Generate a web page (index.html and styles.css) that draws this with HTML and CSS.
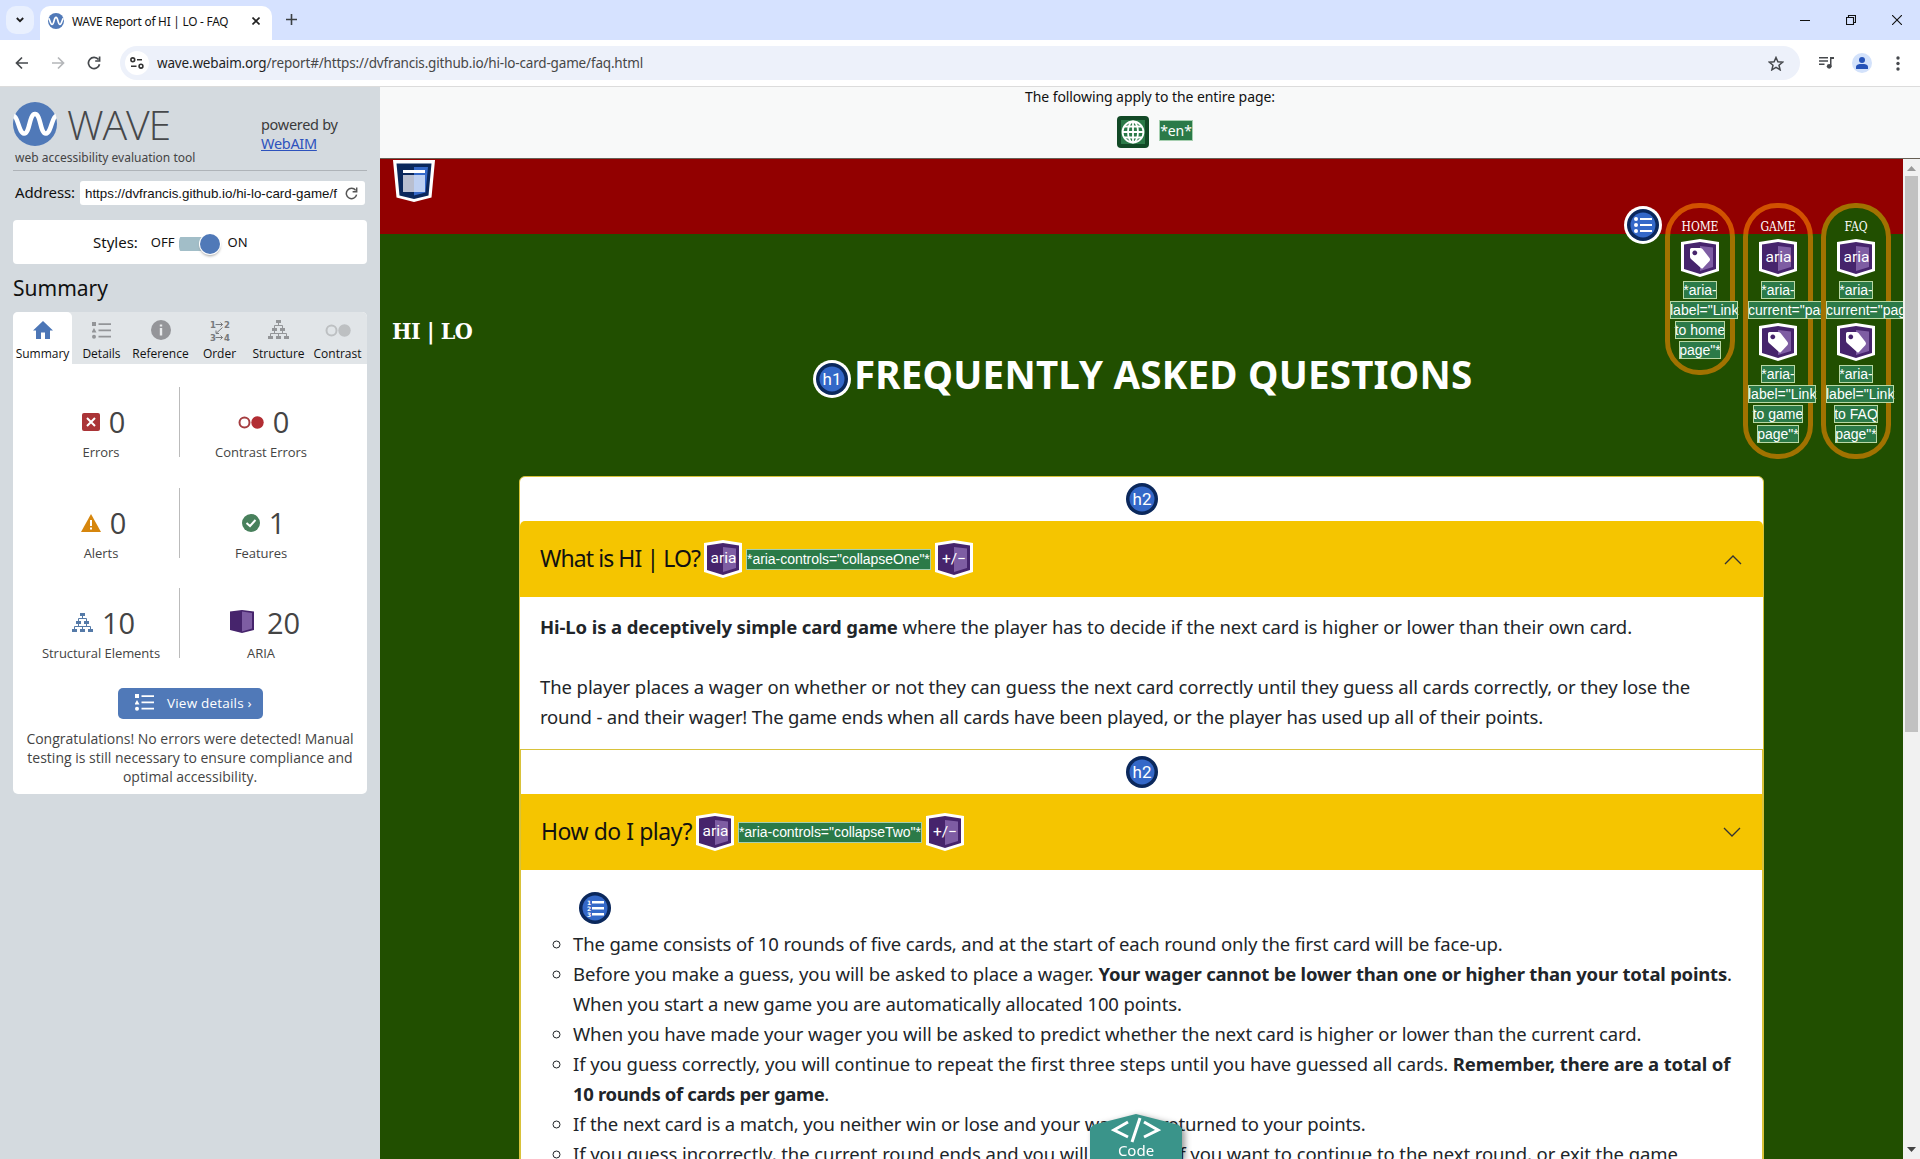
FILE: index.html
```html
<!DOCTYPE html>
<html lang="en">
<head>
<meta charset="utf-8">
<title>WAVE Report of HI | LO - FAQ</title>
<link rel="stylesheet" href="styles.css">
</head>
<body>
<svg class="defs" aria-hidden="true">
  <symbol id="wave" viewBox="0 0 44 44"><circle cx="22" cy="22" r="22" fill="#5079b8"/><path d="M1 14C5 15 6 31 11 31.500C17 32 16 12 22 12S27 32 33 31.500C38 31 39 15 43 14" fill="none" stroke="#fff" stroke-width="4.500"/></symbol>
  <symbol id="aria-base" viewBox="0 0 38 38"><path d="M0 3 19 0 38 3V32L19 38 0 32Z" fill="#fff"/><path d="M3 5.500 19 3 35 5.500V30L19 35 3 30Z" fill="#46246c"/><path d="M19 7 32 8.500V28L19 32Z" fill="#7e5da3"/></symbol>
  <symbol id="label" viewBox="0 0 38 38"><use href="#aria-base"/><path fill-rule="evenodd" d="M9 10.500Q9 9 10.500 9H19Q20.500 9 21.500 10L28.500 19Q29.500 20.500 28.500 22L22 29Q21 30 20 29L10 20Q9 19 9 17.500ZM13.800 11.500a2.400 2.400 0 1 0 .01 0Z" fill="#fff"/></symbol>
  <symbol id="disc" viewBox="0 0 32 32"><circle cx="16" cy="16" r="16" fill="#0b285c"/><circle cx="16" cy="16" r="12.500" fill="#3468c8"/></symbol>
  <symbol id="tree" viewBox="0 0 21 20"><path d="M8 0h5v3H8zM4 8h5v3H4zM12 8h5v3h-5zM0 16h5v3H0zM8 16h5v3H8zM16 16h5v3h-5z"/><path d="M10.500 3V5.500M6.500 8V5.500H14.500V8M6.500 11V13.500M14.500 11V13.500M2.500 16V13.500H18.500V16M10.500 13.500V16" fill="none" stroke="currentColor"/></symbol>
  <symbol id="list" viewBox="0 0 19 17"><path d="M0 0h4v4H0zM2 6 4.500 10.500H-.500zM6.500 1.200H19V3H6.500zM6.500 7.500H19V9.300H6.500zM6.500 13.800H19V15.600H6.500z"/><circle cx="2" cy="14.700" r="2"/></symbol>
</svg>
<header class="tabstrip">
  <div class="tab-search"><svg width="8" height="6" viewBox="0 0 8 6"><path d="M.8 1 4 4.200 7.200 1" fill="none" stroke="#1f1f1f" stroke-width="1.800"/></svg></div>
  <div class="tab"><svg class="favicon"><use href="#wave"/></svg><span class="tab-title">WAVE Report of HI | LO - FAQ</span><svg width="8" height="8" viewBox="0 0 8 8"><path d="M.5.500 7.500 7.500M7.500.500.500 7.500" stroke="#222" stroke-width="1.600"/></svg></div>
  <svg class="new-tab" width="11" height="11" viewBox="0 0 11 11"><path d="M5.500 0V11M0 5.500H11" stroke="#3c4043" stroke-width="1.600"/></svg>
  <div class="window-buttons">
    <svg width="10" height="10" viewBox="0 0 10 10"><path d="M0 5.500H10" stroke="#111"/></svg>
    <svg width="10" height="10" viewBox="0 0 10 10" fill="none" stroke="#111" stroke-width="1.100"><path d="M.5 2.500H7.500V9.500H.5zM2.500 2.500V.500H9.500V7.500H7.500"/></svg>
    <svg width="10" height="10" viewBox="0 0 10 10"><path d="M0 0 10 10M10 0 0 10" stroke="#111" stroke-width="1.100"/></svg>
  </div>
</header>
<nav class="toolbar">
  <div class="history">
    <svg width="14" height="14" viewBox="0 0 14 14" fill="none" stroke="#46494d" stroke-width="1.700"><path d="M13 7H2M7 1.500 1.500 7 7 12.500"/></svg>
    <svg width="14" height="14" viewBox="0 0 14 14" fill="none" stroke="#b4b6b9" stroke-width="1.700"><path d="M1 7H12M7 1.500 12.500 7 7 12.500"/></svg>
    <svg width="14" height="14" viewBox="0 0 14 14" fill="none" stroke="#46494d" stroke-width="1.700"><path d="M12.500 8.200A5.600 5.600 0 1 1 11.500 3.600M12.600.500V5H8.200"/></svg>
  </div>
  <div class="omnibox">
    <span class="site-info"><svg width="14" height="12" viewBox="0 0 14 12" fill="none" stroke="#333" stroke-width="1.600"><circle cx="2.800" cy="2.800" r="1.900"/><path d="M7 2.800H12M1 9.200H6.500"/><circle cx="11" cy="9.200" r="1.900"/></svg></span>
    <span class="url"><b>wave.webaim.org</b>/report#/https://dvfrancis.github.io/hi-lo-card-game/faq.html</span>
    <svg width="16" height="15" viewBox="0 0 16 15"><path d="M8 1.500 9.900 5.800 14.600 6.200 11 9.300 12.100 13.800 8 11.400 3.900 13.800 5 9.300 1.400 6.200 6.100 5.800Z" fill="none" stroke="#46494d" stroke-width="1.500"/></svg>
  </div>
  <div class="tools">
    <svg width="15" height="12" viewBox="0 0 15 12" fill="#46494d"><path d="M0 0H9V1.500H0zM0 3.300H9V4.800H0zM0 6.600H5.500V8.100H0zM11 0H15V2H12.500V9.500H11z"/><circle cx="10.200" cy="9.300" r="2.400"/></svg>
    <svg width="20" height="20" viewBox="0 0 20 20"><circle cx="10" cy="10" r="10" fill="#d3e2fb"/><g fill="#2552b8"><circle cx="10" cy="7" r="3"/><path d="M4 16V14C4 11.500 7 11 10 11S16 11.500 16 14V16Z"/></g></svg>
    <svg width="4" height="15" viewBox="0 0 4 15" fill="#46494d"><circle cx="2" cy="2" r="1.700"/><circle cx="2" cy="7.500" r="1.700"/><circle cx="2" cy="13" r="1.700"/></svg>
  </div>
</nav>
<div class="app">
<aside class="sidebar">
  <div class="brand">
    <div class="brand-name"><div class="brand-row"><svg class="logo"><use href="#wave"/></svg><span class="wordmark">WAVE</span></div><div class="tagline">web accessibility evaluation tool</div></div>
    <div class="powered">powered by<br><a>WebAIM</a></div>
  </div>
  <div class="address"><span class="address-label">Address:</span><div class="field"><span>https://dvfrancis.github.io/hi-lo-card-game/f</span><svg width="13" height="13" viewBox="0 0 14 14" fill="none" stroke="#555" stroke-width="1.600"><path d="M12.500 8.200A5.600 5.600 0 1 1 11.500 3.600M12.600.500V5H8.200"/></svg></div></div>
  <div class="styles-box"><span class="styles-label">Styles:</span><span>OFF</span><span class="toggle"><i></i></span><span>ON</span></div>
  <h2 class="summary-title">Summary</h2>
  <section class="panel">
    <div class="tabs">
      <div class="ptab active"><svg width="20" height="18" viewBox="0 0 20 18" fill="#4c76b6"><path d="M10 0 20 9.500H17V18H12V11.500H8V18H3V9.500H0Z"/></svg><span>Summary</span></div>
      <div class="ptab"><svg class="i-list"><use href="#list"/></svg><span>Details</span></div>
      <div class="ptab"><svg width="20" height="20" viewBox="0 0 20 20"><circle cx="10" cy="10" r="10" fill="#949599"/><path d="M8.800 8H11.200V15.500H8.800zM8.800 4.500H11.200V6.500H8.800z" fill="#e8eaec"/></svg><span>Reference</span></div>
      <div class="ptab"><svg width="20" height="21" viewBox="0 0 20 21" class="order"><text x="0" y="7.500">1</text><text x="14" y="7.500">2</text><text x="0" y="20.500">3</text><text x="14" y="20.500">4</text><path d="M5.500 4.500H12.500M10.500 2.500 12.500 4.500 10.500 6.500M12.500 7.500 6 13.500M6 10.500V13.500H9M5.500 17.500H12.500M10.500 15.500 12.500 17.500 10.500 19.500"/></svg><span>Order</span></div>
      <div class="ptab"><svg class="i-tree"><use href="#tree"/></svg><span>Structure</span></div>
      <div class="ptab"><svg width="26" height="13" viewBox="0 0 26 13"><circle cx="6.500" cy="6.500" r="5" fill="none" stroke="#bdc0c2" stroke-width="2"/><circle cx="19.500" cy="6.500" r="6.200" fill="#bdc0c2"/></svg><span>Contrast</span></div>
    </div>
    <div class="stats">
      <div class="stat"><div class="num"><svg width="18" height="18" viewBox="0 0 18 18"><rect width="18" height="18" rx="2" fill="#aa3437"/><path d="M5 5 13 13M13 5 5 13" stroke="#fff" stroke-width="2"/></svg>0</div>Errors</div>
      <div class="stat"><div class="num"><svg width="26" height="13" viewBox="0 0 26 13"><circle cx="6.500" cy="6.500" r="5" fill="none" stroke="#a53d40" stroke-width="2"/><circle cx="19.500" cy="6.500" r="6.200" fill="#b22d33"/></svg>0</div>Contrast Errors</div>
      <div class="stat"><div class="num"><svg width="20" height="18" viewBox="0 0 20 18"><path d="M10 0 20 18H0Z" fill="#d6860d"/><path d="M9 6H11V12H9zM9 13.500H11V15.500H9z" fill="#fff"/></svg>0</div>Alerts</div>
      <div class="stat"><div class="num"><svg width="18" height="18" viewBox="0 0 18 18"><circle cx="9" cy="9" r="9" fill="#48805c"/><path d="M4.500 9 8 12 13.500 6" fill="none" stroke="#fff" stroke-width="2"/></svg>1</div>Features</div>
      <div class="stat"><div class="num"><svg class="i-tree blue"><use href="#tree"/></svg>10</div>Structural Elements</div>
      <div class="stat"><div class="num aria-num"><svg width="24" height="23" viewBox="0 0 24 23"><path d="M0 1.500 12 0 24 1.500V20L12 23 0 20Z" fill="#46246c"/><path d="M12 1.500 22 3V18.500L12 21.500Z" fill="#7e5da3"/></svg>20</div>ARIA</div>
    </div>
    <div class="view"><svg class="i-list white"><use href="#list"/></svg><span>View details ›</span></div>
    <p class="congrats">Congratulations! No errors were detected! Manual<br>testing is still necessary to ensure compliance and<br>optimal accessibility.</p>
  </section>
</aside>
<div class="report">
  <div class="page-info"><span>The following apply to the entire page:</span>
    <div class="lang"><svg width="32" height="32" viewBox="0 0 32 32"><rect width="32" height="32" rx="4" fill="#124926"/><rect x="4" y="4" width="24" height="24" fill="#2b7a48"/><g fill="none" stroke="#fff" stroke-width="1.800"><circle cx="16" cy="16" r="10.500"/><ellipse cx="16" cy="16" rx="5" ry="10.500"/><path d="M16 5.500V26.500M5.500 16H26.500M7 10.500H25M7 21.500H25"/></g></svg><span class="tagtext">*en*</span></div>
  </div>
  <div class="frame">
  <main class="site">
    <div class="site-head">
      <svg class="shield" width="42" height="42" viewBox="0 0 42 42"><path d="M0 0H42L38.500 37.500 21 42 3.500 37.500Z" fill="#fff"/><path d="M3.500 3.500H38.500L35.500 35.500 21 39 6.500 35.500Z" fill="#0b285c"/><path d="M21 7H35L32.500 32.500 21 35.500Z" fill="#3468c8"/><path d="M10 10H32V13H10z" fill="#fff"/><path d="M10 15H21V32H10z" fill="#b9bfd0"/><path d="M21 15H32V32H21z" fill="#bdd0f2"/></svg>
      <div class="nav">
        <svg class="nav-list" width="38" height="38" viewBox="0 0 38 38"><circle cx="19" cy="19" r="19" fill="#fff"/><use href="#disc" x="3" y="3" width="32" height="32"/><g fill="#fff"><circle cx="12" cy="13" r="2"/><circle cx="12" cy="19" r="2"/><circle cx="12" cy="25" r="2"/><path d="M16 12H28V14H16zM16 18H28V20H16zM16 24H28V26H16z"/></g></svg>
        <div class="pill"><b>HOME</b><svg class="badge"><use href="#label"/></svg><p><span>*aria-</span><br><span>label="Link</span><br><span>to home</span><br><span>page"*</span></p></div>
        <div class="pill"><b>GAME</b><svg class="badge"><use href="#aria-base"/><text x="19.500" y="23" class="aria-text">aria</text></svg><p><span>*aria-</span><br><span>current="page"*</span></p><svg class="badge"><use href="#label"/></svg><p><span>*aria-</span><br><span>label="Link</span><br><span>to game</span><br><span>page"*</span></p></div>
        <div class="pill current"><b>FAQ</b><svg class="badge"><use href="#aria-base"/><text x="19.500" y="23" class="aria-text">aria</text></svg><p><span>*aria-</span><br><span>current="page"*</span></p><svg class="badge"><use href="#label"/></svg><p><span>*aria-</span><br><span>label="Link</span><br><span>to FAQ</span><br><span>page"*</span></p></div>
      </div>
    </div>
    <div class="site-brand">HI | LO</div>
    <h1><svg width="38" height="38" viewBox="0 0 38 38"><circle cx="19" cy="19" r="19" fill="#fff"/><use href="#disc" x="3" y="3" width="32" height="32"/><text x="19" y="25" class="disc-text">h1</text></svg><span>FREQUENTLY ASKED QUESTIONS</span></h1>
    <div class="accordion">
      <section class="item first">
        <div class="h2-row"><svg width="32" height="32"><use href="#disc"/><text x="16" y="22" class="disc-text">h2</text></svg></div>
        <div class="question"><span class="q q-one">What is HI | LO?</span><svg class="badge"><use href="#aria-base"/><text x="19.500" y="23" class="aria-text">aria</text></svg><span class="tagtext">*aria-controls="collapseOne"*</span><svg class="badge"><use href="#aria-base"/><text x="19" y="24" class="aria-text">+/−</text></svg><svg class="chev" width="18" height="11" viewBox="0 0 18 11"><path d="M1 10 9 2 17 10" fill="none" stroke="#333" stroke-width="1.300"/></svg></div>
        <div class="answer"><p><strong>Hi-Lo is a deceptively simple card game</strong> where the player has to decide if the next card is higher or lower than their own card.</p>
        <p><span class="k0">The player places a wager on whether or not they can guess the next card correctly until they guess all cards correctly, or they lose the</span><br><span class="k3">round - and their wager! The game ends when all cards have been played, or the player has used up all of their points.</span></p></div>
      </section>
      <section class="item">
        <div class="h2-row"><svg width="32" height="32"><use href="#disc"/><text x="16" y="22" class="disc-text">h2</text></svg></div>
        <div class="question"><span class="q">How do I play?</span><svg class="badge"><use href="#aria-base"/><text x="19.500" y="23" class="aria-text">aria</text></svg><span class="tagtext">*aria-controls="collapseTwo"*</span><svg class="badge"><use href="#aria-base"/><text x="19" y="24" class="aria-text">+/−</text></svg><svg class="chev" width="18" height="11" viewBox="0 0 18 11"><path d="M1 1 9 9 17 1" fill="none" stroke="#333" stroke-width="1.300"/></svg></div>
        <div class="rules">
          <svg width="32" height="32"><use href="#disc"/><g fill="#fff"><path d="M13 9H25V11.500H13zM13 15H25V17.500H13zM13 21H25V23.500H13z"/><text x="8" y="12.500" class="tiny">1</text><text x="8" y="18.500" class="tiny">2</text><text x="8" y="24.500" class="tiny">3</text></g></svg>
          <ul>
            <li><span class="k2">The game consists of 10 rounds of five cards, and at the start of each round only the first card will be face-up.</span></li>
            <li><span class="k0">Before you make a guess, you will be asked to place a wager. </span><span class="k4"><strong>Your wager cannot be lower than one or higher than your total points</strong>.</span><br><span class="k2">When you start a new game you are automatically allocated 100 points.</span></li>
            <li>When you have made your wager you will be asked to predict whether the next card is higher or lower than the current card.</li>
            <li>If you guess correctly, you will continue to repeat the first three steps until you have guessed all cards. <strong class="k2">Remember, there are a total of</strong><br><span class="k5"><strong>10 rounds of cards per game</strong>.</span></li>
            <li><span class="k2">If the next card is a match, you neither win or lose and your wager is returned to your points.</span></li>
            <li><span class="k0">If you guess incorrectly, the current round ends and you will be asked if you want to continue to the next round, or exit the game</span></li>
          </ul>
        </div>
      </section>
    </div>
  </main>
  <div class="scrollbar"><svg width="9" height="5" viewBox="0 0 9 5"><path d="M0 5 4.500 0 9 5Z" fill="#9a9a9a"/></svg><i></i><svg width="9" height="5" viewBox="0 0 9 5"><path d="M0 0 4.500 5 9 0Z" fill="#444"/></svg></div>
  <div class="code-tab"><div class="code-face"><svg width="50" height="26" viewBox="0 0 50 26" fill="none" stroke="#fff" stroke-width="3"><path d="M17 5 3 13 17 20M33 5 47 13 33 20M29 1 21 25"/></svg><span>Code</span></div></div>
  </div>
</div>
</div>
</body>
</html>
```
FILE: styles.css
```css
* { box-sizing: border-box; }
body { margin: 0; width: 1920px; height: 1159px; overflow: hidden; font-family: "Noto Sans", "Open Sans", sans-serif; color: #111; }
svg { flex: none; display: block; }
.defs { position: absolute; width: 0; height: 0; }

/* Browser window */
.tabstrip { height: 40px; background: #d6e2ff; display: flex; padding: 6px 18px 0 6px; }
.tab-search { width: 28px; height: 28px; border-radius: 10px; background: #e9f0fe; display: grid; place-items: center; margin-right: 6px; }
.tab { width: 232px; background: #fff; border-radius: 10px 10px 0 0; display: flex; align-items: center; padding: 0 12px 4px 8px; font-size: 11.800px; letter-spacing: -.2px; }
.favicon { width: 16px; height: 16px; margin-right: 8px; }
.tab-title { flex: 1; white-space: nowrap; }
.new-tab { margin: 8px 0 0 14px; }
.window-buttons { margin: 9px 0 0 auto; display: flex; gap: 36px; }
.toolbar { height: 47px; border-bottom: 1px solid #dcdcdc; background: #fff; display: flex; align-items: center; padding: 0 0 0 15px; }
.history { display: flex; gap: 22px; width: 105px; }
.omnibox { flex: none; width: 1680px; height: 34px; border-radius: 17px; background: #edf1fa; display: flex; align-items: center; padding: 0 16px 0 5px; font-size: 13.500px; letter-spacing: -.17px; color: #474747; }
.omnibox b { font-weight: 400; color: #1f1f1f; }
.site-info { width: 24px; height: 24px; border-radius: 50%; background: #fff; display: grid; place-items: center; margin-right: 8px; }
.url { flex: 1; }
.tools { display: flex; align-items: center; gap: 18px; margin-left: 19px; }
.tools svg:last-child { margin-left: 6px; }

/* Evaluation sidebar */
.app { display: flex; height: 1072px; }
.sidebar { width: 380px; background: #d4dadf; padding: 13px 13px 0; }
.brand { height: 71px; border-bottom: 1px solid #aeb3b8; display: flex; justify-content: space-between; }
.brand-row { display: flex; gap: 10px; height: 50px; }
.logo { width: 44px; height: 44px; margin-top: 2px; }
.wordmark { font: 300 41px/49px "Open Sans"; letter-spacing: -1.100px; color: #46484b; }
.tagline { font-size: 12px; line-height: 16px; color: #444; padding-left: 2px; }
.powered { width: 106px; padding-top: 15px; font-size: 14.500px; letter-spacing: -.3px; line-height: 19px; color: #3b3b3b; }
.powered a { color: #2d52bd; text-decoration: underline; }
.address { margin-top: 10px; display: flex; align-items: center; height: 24px; padding: 0 2px; font-size: 15px; justify-content: space-between; }
.address-label { padding-bottom: 2px; letter-spacing: -.1px; }
.field { width: 285px; height: 24px; background: #fff; border-radius: 3px; display: flex; align-items: center; justify-content: space-between; padding: 0 7px 0 5px; font: 13.330px "Liberation Sans"; }
.styles-box { margin-top: 15px; height: 44px; background: #fff; border-radius: 4px; display: flex; align-items: center; padding-left: 80px; font-size: 13px; }
.styles-label { font-size: 15px; margin-right: 13px; }
.toggle { width: 41px; height: 20px; margin: 4px 8px 0 4px; display: flex; justify-content: flex-end; background: linear-gradient(#a2bec8, #a2bec8) 0 3px / 32px 14px no-repeat; border-radius: 7px; }
.toggle i { width: 20px; height: 20px; border-radius: 50%; background: #5079b8; box-shadow: 0 0 0 1px #fff, 0 2px 3px #999; }
.summary-title { margin: 9px 0 0; font-size: 21px; line-height: 30px; font-weight: 400; height: 39px; }
.panel { background: #fff; border-radius: 5px; height: 482px; }
.tabs { display: grid; grid-template-columns: repeat(6, 59px); background: #e1e5e8; border-radius: 5px 5px 0 0; height: 52px; }
.ptab { display: grid; grid-template-rows: 36px 16px; justify-items: center; align-items: center; font: 12px/16px "Open Sans"; }
.ptab span { margin-top: -4px; }
.active { background: #fff; border-radius: 5px 5px 0 0; }
.i-list { width: 19px; height: 17px; fill: #939598; overflow: visible; }
.i-tree { width: 21px; height: 20px; fill: #939598; color: #939598; }
.white { fill: #fff; }
.blue { fill: #557aa8; color: #557aa8; }
.order { fill: #77797b; font: bold 8.500px "DejaVu Sans"; }
.order path { fill: none; stroke: #77797b; }
.stats { display: grid; grid-template: repeat(3, 100.500px) / 160px 160px; padding: 23px 0 0 8px; }
.stat { display: flex; flex-direction: column; align-items: center; padding-top: 14px; font: 13px/18px "Open Sans"; letter-spacing: -.05px; color: #444; }
.stat:nth-child(odd) { background: linear-gradient(#bbb, #bbb) 158px 0 / 1px 70px no-repeat; }
.num { display: flex; align-items: center; gap: 9px; font-size: 29px; line-height: 40px; height: 42px; padding-left: 5px; }
.aria-num { gap: 13px; padding-left: 8px; }
.aria-num svg { margin-top: -3px; }
.view { width: 145px; height: 31px; margin: -1px auto 0 105px; background: #5079b8; border-radius: 5px; color: #fff; display: flex; align-items: center; gap: 13px; padding: 0 0 1px 17px; font: 13.500px "Open Sans"; letter-spacing: .2px; }
.congrats { margin: 10px 0 0; text-align: center; font: 14px/19px "Open Sans"; color: #444; }

/* Evaluated page */
.report { width: 1540px; }
.page-info { height: 72px; background: #f8f9f9; border-bottom: 1px solid #676055; display: flex; flex-direction: column; align-items: center; font-size: 14px; letter-spacing: -.08px; line-height: 20px; }
.lang { display: flex; gap: 10px; margin-top: 9px; align-items: center; padding-left: 10px; }
.tagtext { background: #2b7a48; color: #fff; border: 1px solid #a6cfb0; font-size: 14px; line-height: 19px; }
.lang .tagtext { margin-top: -3px; }
.frame { height: 1000px; display: flex; position: relative; overflow: hidden; }
.site { width: 1523px; height: 1000px; overflow: hidden; background: linear-gradient(#920000, #920000) 0 0 / 100% 75px no-repeat #214f00; }
.site-head { height: 144px; display: flex; justify-content: space-between; padding: 1px 12px 0 13px; }
.nav { display: flex; gap: 8px; padding-top: 43px; align-items: flex-start; }
.nav-list { margin: 3px -5px 0 0; }
.pill { width: 70px; border: 5px solid rgba(255, 140, 0, .58); border-radius: 34px; padding: 10px 0 8px; color: #fff; }
.pill.current { background: #214f00; }
.pill b { display: block; height: 21px; text-align: center; font: 12px/18px "DejaVu Serif Condensed", "DejaVu Serif"; font-stretch: condensed; letter-spacing: -.1px; }
.badge { width: 38px; height: 38px; }
.pill .badge { margin: 0 auto; }
.pill p { margin: 3px 0 3px; text-align: center; font: 14px/20px "Liberation Sans"; white-space: nowrap; }
.pill p + .badge { margin-top: 0; }
.pill p:last-child { margin-bottom: 2px; }
.pill p span { background: #2b7a48; outline: 1px solid #b9d9a5; padding: 1px 0; outline-offset: -1px; }
.aria-text { font: 15.500px Roboto; letter-spacing: 0; fill: #fff; text-anchor: middle; }
.disc-text { font: 17px Roboto; letter-spacing: 0; fill: #fff; text-anchor: middle; }
.tiny { font: bold 6px "DejaVu Sans"; }
.site-brand { margin-top: 13px; padding-left: 12px; color: #fff; font: bold 23px/30px "DejaVu Serif Condensed", "DejaVu Serif"; font-stretch: condensed; letter-spacing: -.5px; height: 44px; }
h1 { margin: 0 0 0 433px; display: flex; gap: 3px; height: 116px; color: #fff; font: bold 38.500px/29px "Noto Sans"; letter-spacing: .22px; }
.accordion { margin-left: 139px; width: 1245px; background: #fff; border: 1px solid #d8c23a; border-radius: 6px 6px 0 0; }
.item + .item { border: solid #d8c23a; border-width: 1px 1px 0; }
.h2-row { height: 44px; display: flex; justify-content: center; padding-top: 6px; }
.question { height: 76px; background: #f5c500; display: flex; align-items: center; gap: 4px; padding: 0 21px 0 20px; }
.first .question { border-radius: 5px 5px 0 0; }
.q { font-size: 23px; line-height: 30px; padding-bottom: 3px; letter-spacing: -.47px; }
.q-one { letter-spacing: -.92px; }
.question .tagtext { font: 14px/19px "Liberation Sans"; letter-spacing: -.04px; }
.chev { margin-left: auto; }
.answer, .rules { color: #212529; font-size: 18.500px; line-height: 30px; letter-spacing: -.1px; white-space: nowrap; }
.k0 { letter-spacing: -.087px; }
.k2 { letter-spacing: -.145px; }
.k3 { letter-spacing: -.177px; }
.k4 { letter-spacing: -.215px; }
.k5 { letter-spacing: -.35px; }
.answer { padding: 15px 20px 17px; }
.answer p { margin: 0; }
.answer p + p { margin-top: 30px; }
.rules svg { margin: 22px 0 5px 58px; }
.rules ul { margin: 0; padding-left: 52px; list-style: circle; }
.scrollbar { width: 17px; background: #f1f1f1; display: flex; flex-direction: column; align-items: center; justify-content: space-between; padding: 7px 0; }
.scrollbar i { width: 13px; height: 556px; background: #c1c1c1; margin: 5px 0 auto; }
.code-tab { position: absolute; left: 710px; bottom: 0; filter: drop-shadow(3px 2px 3px rgba(0, 0, 0, .4)); }
.code-face { width: 92px; height: 45px; background: #3a948a; clip-path: polygon(50% 0, 96% 24%, 100% 32%, 100% 100%, 0 100%, 0 32%, 4% 24%); color: #fff; display: flex; flex-direction: column; align-items: center; padding-top: 3px; font-size: 15px; line-height: 14px; }
```
